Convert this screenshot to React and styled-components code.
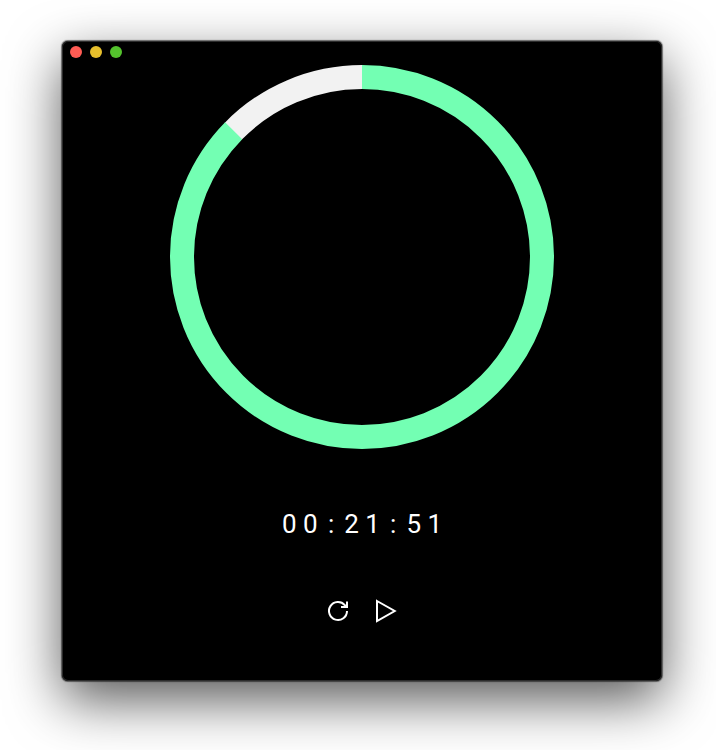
import React from "react";
import styled, { createGlobalStyle } from "styled-components";

const GlobalStyle = createGlobalStyle`
  *, *::before, *::after { box-sizing: border-box; }
  html, body { margin: 0; height: 100%; overflow: hidden; background: #fff; }
  body { font-family: Roboto, sans-serif; }
`;

const Desktop = styled.main`
  height: 750px;
  padding: 41px 0 0 62px;
  overflow: hidden;
`;

const Window = styled.section`
  display: flex;
  flex-direction: column;
  align-items: center;
  width: 600px;
  height: 640px;
  background: #000;
  border-radius: 6px;
  box-shadow:
    inset 0 0 0 1px #2c2c2c,
    0 0 1px 0.5px rgba(0, 0, 0, 0.5),
    0 19px 54px rgba(0, 0, 0, 0.66);
`;

const TitleBar = styled.header`
  display: flex;
  align-items: center;
  align-self: stretch;
  gap: 8px;
  height: 24px;
  padding: 0 8px 2px;
`;

const WindowButton = styled.span`
  width: 12px;
  height: 12px;
  border-radius: 50%;
  background: ${({ $color }) => $color};
`;

const Dial = styled.svg`
  display: block;
  flex: none;
  width: 384px;
  height: 384px;
`;

const Time = styled.div`
  display: flex;
  height: 30px;
  margin-top: 60px;
  padding-left: 6.4px;
  color: #fff;
  font-size: 26px;
  line-height: 30px;
  letter-spacing: 6.4px;
`;

const Colon = styled.span`
  margin: 0 3.6px 0 3.9px;
`;

const Controls = styled.div`
  display: flex;
  gap: 24px;
  margin-top: 60px;
`;

const IconButton = styled.button`
  display: flex;
  width: 24px;
  height: 24px;
  padding: 0;
  border: 0;
  background: none;
  color: #fff;
`;

const Icon = styled.svg`
  width: 24px;
  height: 24px;
  fill: none;
  stroke: currentColor;
  stroke-width: 2;
`;

const RADIUS = 180;
const CIRCUMFERENCE = 2 * Math.PI * RADIUS;

function ProgressDial({ remaining, total }) {
  const length = (remaining / total) * CIRCUMFERENCE;
  const track = CIRCUMFERENCE - length + 1;
  return (
    <Dial viewBox="0 0 384 384" fill="none" strokeWidth="24">
      <circle cx="192" cy="192" r={RADIUS} stroke="#f2f2f2"
        strokeDasharray={`${track} ${CIRCUMFERENCE - track}`}
        strokeDashoffset={-(length - 1)} transform="rotate(-90 192 192)" />
      <circle cx="192" cy="192" r={RADIUS} stroke="#73ffb3"
        strokeDasharray={`${length} ${CIRCUMFERENCE - length}`}
        transform="rotate(-90 192 192)" />
    </Dial>
  );
}

export default function App() {
  return (
    <>
      <GlobalStyle />
      <Desktop>
        <Window>
          <TitleBar>
            <WindowButton $color="#ff5c54" />
            <WindowButton $color="#e6bf2c" />
            <WindowButton $color="#54c22d" />
          </TitleBar>
          <ProgressDial remaining={1310} total={1500} />
          <Time>
            <span>00</span><Colon>:</Colon><span>21</span><Colon>:</Colon><span>51</span>
          </Time>
          <Controls>
            <IconButton aria-label="Restart">
              <Icon viewBox="0 0 24 24">
                <path d="M21 12A9 9 0 1 1 18.8 6.1L20.5 8" />
                <path d="M21 2.5V8H15" />
              </Icon>
            </IconButton>
            <IconButton aria-label="Play">
              <Icon viewBox="0 0 24 24">
                <path d="M3 2L20.7 12L3 22Z" />
              </Icon>
            </IconButton>
          </Controls>
        </Window>
      </Desktop>
    </>
  );
}
